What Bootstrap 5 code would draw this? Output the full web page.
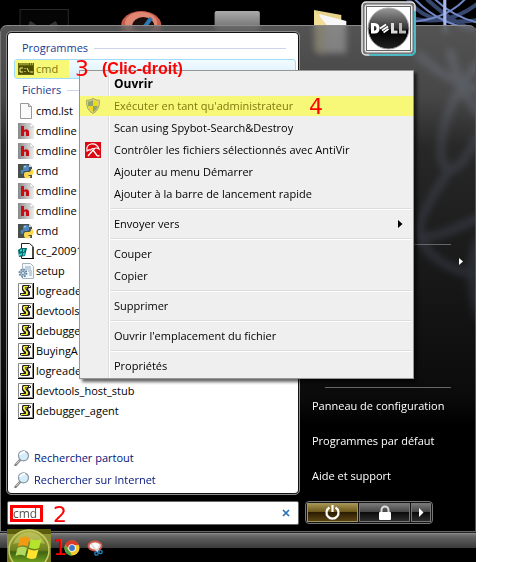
<!DOCTYPE html>
<html lang="fr">
<head>
<meta charset="utf-8">
<meta name="viewport" content="width=device-width, initial-scale=1">
<title>Menu Démarrer</title>
<link href="https://cdn.jsdelivr.net/npm/bootstrap@5.3.0/dist/css/bootstrap.min.css" rel="stylesheet">
<style>
body{font-family:"Open Sans","Noto Sans",sans-serif;font-size:11px;line-height:20px;background:#fff;color:#000;padding-right:36px}
button,input{font:inherit;color:inherit}
svg{flex:none;display:block}
.desktop{min-height:100vh;background:#000;padding-top:25px}
.wallpaper{position:absolute;inset:0;width:100%;height:100%}
.start-menu{border:1px solid #8a8a8a;border-color:#8a8a8a #555 #666 #777;border-radius:7px 7px 0 0;padding:6px;gap:6px;backdrop-filter:blur(3px);
 background:linear-gradient(rgba(104,104,104,.8) 0,rgba(88,88,88,.8) 70px,rgba(50,50,50,.8) 120px,rgba(32,32,32,.78) 240px,rgba(12,12,12,.88) 370px,#000 400px)}
.left-col{flex:0 0 292px;gap:7px}
.results{background:#fff;border:1px solid #111;outline:1px solid #8d8d8d;outline-offset:0;border-radius:4px;height:462px;padding:4px 2px 2px 6px}
.group-title{color:#1a3b94;height:22px;padding:0 10px 0 8px;gap:6px}
.group-title::after{content:"";flex:1;height:1px;background:#ccd5ea}
.item{border:0;background:none;text-align:left;height:20px;padding:0 4px;gap:2px;white-space:nowrap}
.item.hit{border:1px solid #9fdcfa;border-radius:3px;background:linear-gradient(#f3fbff,#d8f0fd);padding:0 3px}
.hit-mark{background:#f8f877;color:#777a10;margin:0 0 0 -3px;padding:0 11px 0 3px;gap:2px;height:18px;border-radius:2px 0 0 2px}
.search-links{color:#00147a}
.search-links a{color:inherit;text-decoration:none;height:22px;gap:4px}
.search-row{height:24px;background:#fff;border:1px solid #666;border-radius:2px}
.search-row input{border:0;outline:0;padding:0 5px;width:100%;height:22px;background:none;color:#555;font-size:12px}
.ring{left:2px;top:3px;width:33px;height:17px;border:3px solid #f00;pointer-events:none}
.clear-btn{border:0;background:none;width:26px;padding:0}
.side{min-width:0}
.side a{color:#fff;text-decoration:none;height:35px;line-height:35px;padding-left:7px;white-space:nowrap}
.rule{height:1px;background:#666;margin:0 18px 0 20px}
.spacer-top{height:212px}
.more{height:142px;padding:12px 5px 0 0}
.power{border:1px solid #777;border-radius:4px;height:23px;width:128px;background:#111;padding:1px;gap:1px;margin-bottom:1px}
.power button{border:1px solid #777;padding:0;background:linear-gradient(#777,#444 48%,#0c0c0c 50%,#2c2c2c);flex:0 0 51px}
.power button:first-child{background:linear-gradient(#a4924f,#6a5519 48%,#2c1c02 50%,#5a4513);border-color:#a09463}
.power button:last-child{flex:1}
.taskbar{flex:1 0 32px;border-top:1px solid #222;background:linear-gradient(#999 0,#777 1px,#606060 4px,#3a3a3a 15px,#000 15px)}
.orb-btn{border:0;padding:0;margin:-4px 0 0 7px;width:44px;height:36px;background:#77791b;overflow:hidden}
.quick{padding-left:12px;gap:6px;height:30px}
.quick button{border:0;padding:0;background:none}
.avatar{left:361px;top:1px}
.context{left:79px;top:70px;width:335px;background:#efefef;border:1px solid #979797;padding:2px 0 1px;box-shadow:3px 3px 3px rgba(0,0,0,.6);
 background-image:linear-gradient(90deg,transparent 28px,#dedede 28px,#dedede 29px,#fff 29px,#fff 30px,transparent 30px)}
.context button{border:0;background:none;width:100%;height:22px;text-align:left;padding:0 10px 0 0;white-space:nowrap}
.context .main-action{font-size:12px}
.context .pic{width:34px;padding-left:5px;flex:none}
.context .asked{background:#f8f878;color:#7e7a10;height:20px;margin:1px 0}
.cut{height:8px;padding:3px 2px 0 30px}
.cut::before{content:"";display:block;height:2px;background:#dcdcdc;border-bottom:1px solid #fff}
.note{color:#f00;font:22px/22px "DejaVu Sans",sans-serif;pointer-events:none}
.note-text{font:bold 16px/20px "Liberation Sans",Arial,sans-serif}
.n1{left:53px;top:537px}.n2{left:53px;top:504px}.n3{left:75px;top:58px}.n4{left:309px;top:96px}.n5{left:102px;top:59px}
</style>
<script src="https://cdn.jsdelivr.net/npm/bootstrap@5.3.0/dist/js/bootstrap.bundle.min.js"></script>
</head>
<body>
<svg width="0" height="0" class="position-absolute" aria-hidden="true">
<defs>
<linearGradient id="g-grey" x2="0" y2="1"><stop stop-color="#aaa"/><stop offset="1" stop-color="#666"/></linearGradient>
<linearGradient id="g-orb" x2="0" y2="1"><stop stop-color="#b0b23c"/><stop offset=".5" stop-color="#6e8020"/><stop offset=".55" stop-color="#3f6410"/><stop offset="1" stop-color="#92c82a"/></linearGradient>
<linearGradient id="g-dell" x2="0" y2="1"><stop stop-color="#999"/><stop offset=".5" stop-color="#333"/><stop offset=".55" stop-color="#000"/><stop offset="1" stop-color="#222"/></linearGradient>
<linearGradient id="g-h"><stop stop-color="#888"/><stop offset="1" stop-color="#eee"/></linearGradient>
<symbol id="i-page" viewBox="0 0 16 16"><path d="M2.500.5h8l3 3v12h-11z" fill="#fafafa" stroke="#999"/><path d="M10.500.5v3h3" fill="#ddd" stroke="#999"/></symbol>
<symbol id="i-h" viewBox="0 0 16 16"><path d="M0 0h12l4 4v12H0z" fill="url(#g-h)"/><path d="M12 0v4h4z" fill="#fff" stroke="#aaa" stroke-width=".5"/><path d="M3 3h3v4c2-1.500 5-1 5 2v4H8V9.500C8 8 6 8 6 9.500V13H3z" fill="#c80d12"/></symbol>
<symbol id="i-py" viewBox="0 0 16 16"><path d="M0 1h11l3 3v11H0z" fill="#47504b"/><path d="M11 1v3h3z" fill="#ddd"/><path d="M5 7V4q0-2 3-2t3 2v3q0 1-2 1H7q-2 0-2 3H4Q2 10 3 7z" fill="#4c88bd"/><path d="M14 6q2 1 1.500 4-.5 2-2 2h-3v1h2q0 2.500-3 2.500T6 13v-2q0-2 2-2h3q2 0 2-3z" fill="#fbd54b"/><circle cx="7" cy="3.800" r=".7" fill="#fff"/><circle cx="11" cy="14" r=".6" fill="#fff"/></symbol>
<symbol id="i-reg" viewBox="0 0 16 16"><path d="M3.500.5h8l3.500 3v12H3.500z" fill="#fff" stroke="#222"/><path d="M15 4v12M4 15.500h12" stroke="#000"/><path d="M0 7l3-2 6 0-2 8-6 1z" fill="#066"/><path d="M2 7l2-1v2l-2 1zM5 6h2l-1 3H5zM1 11l3-1v2l-3 1zM5 10l2-.5-.5 3H5z" fill="#2bd5d0"/></symbol>
<symbol id="i-setup" viewBox="0 0 16 16"><path d="M4.500.5h8l3 3v12h-11z" fill="#f3f8fc" stroke="#a5b3bf"/><path d="M7 4h6M7 6h6M10 8h4M11 10h3M11 12h3" stroke="#8fa8bb"/><circle cx="5" cy="10" r="3.500" fill="#b7cad9" stroke="#6d8ba5" stroke-width="2" stroke-dasharray="1.700 1"/><circle cx="5" cy="10" r="1.500" fill="#fff" stroke="#6d8ba5"/></symbol>
<symbol id="i-js" viewBox="0 0 16 16"><path d="M.5.5h14v14H.5z" fill="#fff" stroke="#888"/><path d="M15.500 0v15.500H0" fill="none" stroke="#000"/><path d="M5 2h6l2 1v2h-2l-1 1 2 3v3l-2 1H4l-2-1v-2h4l-2-3V3z" fill="#222"/><path d="M6 3h4v1H7v2l3 3v2l-1 1H4v-1h4V9L5 6V4z" fill="#f3e82e"/><path d="M11 3h1v1h-1zM3 11h1v1H3z" fill="#fff"/><path d="M7 5h2M6 7h2M8 9h1" stroke="#fff79a" stroke-width=".8"/></symbol>
<symbol id="i-mag" viewBox="0 0 16 16"><path d="M6 10L1.500 15" stroke="#777" stroke-width="2.400" stroke-linecap="round"/><path d="M5.500 10.500L2 14.300" stroke="#ddd"/><circle cx="9.500" cy="5.800" r="5" fill="#d5edfb" stroke="#8a98a5" stroke-width="1.200"/><path d="M6 5q1-3 5-3" stroke="#fff" stroke-width="2" fill="none"/></symbol>
</defs></svg>

<main class="desktop position-relative d-flex flex-column">
<svg class="wallpaper" viewBox="0 0 476 562" preserveAspectRatio="xMaxYMin slice" aria-hidden="true">
<path d="M22.500 9.500h48v40h-48z" fill="#050505" stroke="#292929"/><path d="M31 24q1-3 2-3l6 4h12l7-4 2 4v8H31z" fill="#333"/>
<ellipse cx="143" cy="25" rx="20" ry="14" fill="#c95b4c"/><ellipse cx="143" cy="23" rx="16" ry="11" fill="#e08774"/><ellipse cx="145" cy="26" rx="11" ry="9" fill="#1a0e0d"/><path d="M146 27l7-9" stroke="#2d79b4" stroke-width="4"/>
<rect x="216" y="11" width="45" height="20" rx="2" fill="url(#g-grey)"/>
<path d="M315 10l27 5v12l-20 28-7-5z" fill="#e9d48d"/><path d="M320 14l27 7v32h-22z" fill="#f7f7f7"/><path d="M315 10l12 14-3 31-9-5z" fill="#f3dd94"/>
<g fill="none" stroke-linecap="round">
<g stroke="#37466f" stroke-width="4"><path d="M409 0q20 30 80 18M428 0q30 27 50 30M400 14q45 18 82-14"/></g>
<g stroke="#7187c5" stroke-width="2"><path d="M445-3q-2 20 2 36M414-2q26 28 66 32M433-3q18 19 46 26M408 22q40-2 60-26"/></g>
<path d="M445 0v30" stroke="#a8b8ef" stroke-width="3"/>
<g stroke="#6f82ad" stroke-width="8" opacity=".8" style="filter:blur(2px)"><path d="M420 55q25 25 60 35M450 52q10 35 30 66M480 60Q440 110 441 153q2 22 18 12 12-14 23-40M449 170q-34 50-29 62 3 12 62-17M420 237q15 30 62 38M482 230q-18 35-4 85"/></g></g>
</svg>

<section class="start-menu position-relative d-flex">
<div class="left-col d-flex flex-column">
<div class="results d-flex flex-column">
<div class="group-title d-flex align-items-center">Programmes</div>
<button class="item hit d-flex align-items-center"><span class="hit-mark d-flex align-items-center"><svg width="16" height="16" viewBox="0 0 16 16"><path d="M0 2h16v12H0z" fill="#63650d"/><path d="M1 3h10" stroke="#bec04a"/><path d="M12 3h3" stroke="#f3f477" stroke-dasharray="1"/><path d="M1 5h14v8H1z" fill="#4b4c00"/><path d="M5 7H2v4h3M7 7v1M7 10v1M9 7l2 4M12 11h3" stroke="#f4f48a" fill="none"/></svg>cmd</span></button>
<div class="group-title d-flex align-items-center">Fichiers</div>
<button class="item d-flex align-items-center"><svg width="16" height="16"><use href="#i-page"/></svg>cmd.lst</button>
<button class="item d-flex align-items-center"><svg width="16" height="16"><use href="#i-h"/></svg>cmdline</button>
<button class="item d-flex align-items-center"><svg width="16" height="16"><use href="#i-h"/></svg>cmdline</button>
<button class="item d-flex align-items-center"><svg width="16" height="16"><use href="#i-py"/></svg>cmd</button>
<button class="item d-flex align-items-center"><svg width="16" height="16"><use href="#i-h"/></svg>cmdline</button>
<button class="item d-flex align-items-center"><svg width="16" height="16"><use href="#i-h"/></svg>cmdline</button>
<button class="item d-flex align-items-center"><svg width="16" height="16"><use href="#i-py"/></svg>cmd</button>
<button class="item d-flex align-items-center"><svg width="16" height="16"><use href="#i-reg"/></svg>cc_20091</button>
<button class="item d-flex align-items-center"><svg width="16" height="16"><use href="#i-setup"/></svg>setup</button>
<button class="item d-flex align-items-center"><svg width="16" height="16"><use href="#i-js"/></svg>logreader</button>
<button class="item d-flex align-items-center"><svg width="16" height="16"><use href="#i-js"/></svg>devtools</button>
<button class="item d-flex align-items-center"><svg width="16" height="16"><use href="#i-js"/></svg>debugger</button>
<button class="item d-flex align-items-center"><svg width="16" height="16"><use href="#i-js"/></svg>BuyingA</button>
<button class="item d-flex align-items-center"><svg width="16" height="16"><use href="#i-js"/></svg>logreader</button>
<button class="item d-flex align-items-center"><svg width="16" height="16"><use href="#i-js"/></svg>devtools_host_stub</button>
<button class="item d-flex align-items-center"><svg width="16" height="16"><use href="#i-js"/></svg>debugger_agent</button>
<div class="search-links mt-auto">
<a href="#" class="d-flex align-items-center"><svg width="16" height="16"><use href="#i-mag"/></svg>Rechercher partout</a>
<a href="#" class="d-flex align-items-center"><svg width="16" height="16"><use href="#i-mag"/></svg>Rechercher sur Internet</a>
</div>
</div>
<div class="search-row position-relative d-flex align-items-center">
<input type="text" value="cmd" aria-label="Rechercher">
<button class="clear-btn" aria-label="Effacer"><svg class="mx-auto" width="8" height="8" viewBox="0 0 8 8"><path d="M1 1l6 6M7 1L1 7" stroke="#2a72b5" stroke-width="1.700"/></svg></button>
<span class="ring position-absolute"></span>
</div>
</div>
<nav class="side flex-fill d-flex flex-column">
<div class="spacer-top"></div>
<div class="rule"></div>
<div class="more d-flex justify-content-end"><svg width="5" height="9" viewBox="0 0 5 9"><path d="M0 1l4 3.500L0 8z" fill="#fff"/></svg></div>
<div class="rule"></div>
<a href="#">Panneau de configuration</a>
<a href="#">Programmes par défaut</a>
<a href="#">Aide et support</a>
<div class="power d-flex mt-auto">
<button aria-label="Arrêter"><svg class="mx-auto" width="17" height="17" viewBox="0 0 17 17"><path d="M5.500 3.500a6 6 0 1 0 6 0M8.500 1v7" stroke="#fff" stroke-width="2.200" fill="none"/></svg></button>
<button aria-label="Verrouiller"><svg class="mx-auto" width="14" height="16" viewBox="0 0 14 16"><path d="M3.500 8V5a3.500 3.500 0 0 1 7 0v3" fill="none" stroke="#ddd" stroke-width="2"/><rect x="1" y="7" width="12" height="8" rx="1" fill="#fff"/></svg></button>
<button aria-label="Options"><svg class="mx-auto" width="5" height="9" viewBox="0 0 5 9"><path d="M0 0l4.500 4.500L0 9z" fill="#fff"/></svg></button>
</div>
</nav>
</section>

<footer class="taskbar position-relative d-flex">
<button class="orb-btn d-flex align-items-start" aria-label="Démarrer"><svg width="44" height="36" viewBox="0 0 44 36"><path d="M0 0h44v5H0z" fill="#5b5c0c"/><path d="M0 5h44v14H0z" fill="#8d8f33"/><circle cx="22" cy="21" r="20" fill="url(#g-orb)" stroke="#c5cc69" stroke-width="1.500"/><path d="M6 15Q11 3 22 3t16 12q-16-5-32 0z" fill="#d0d47a" opacity=".5"/><g transform="translate(0 -1)"><path d="M13 10q5-3 9.500 0l-2 8.500q-4-2.500-9.500 0z" fill="#f39a12"/><path d="M24 11q5 2.500 10.500 0l-2.500 9q-5 2-10-.5z" fill="#b4e52c"/><path d="M10.500 20q5-2.500 9.500 0l-2 8q-4.500-2.500-9.500 0z" fill="#b3d95d"/><path d="M21.500 21q5 2.500 10 .5l-2.500 8.500q-5 2-9.500-.5z" fill="#ffe32e"/></g></svg></button>
<div class="quick d-flex align-items-center">
<button aria-label="Chrome"><svg width="18" height="18" viewBox="0 0 18 18"><circle cx="9" cy="9" r="7.500" fill="#f4cb31"/><path d="M2 6a7.500 7.500 0 0 1 14 0H9L6 10z" fill="#d93a2b"/><path d="M2 6l5 7 2 3.500A7.500 7.500 0 0 1 2 6z" fill="#4fa544"/><circle cx="9" cy="9" r="3.800" fill="#fff"/><circle cx="9" cy="9" r="2.900" fill="#3e78c8"/></svg></button>
<button aria-label="Capture"><svg width="17" height="18" viewBox="0 0 17 18"><ellipse cx="8" cy="7" rx="6.500" ry="4.500" fill="#fff" stroke="#cf5c4b" stroke-width="2"/><path d="M4 5l7 8M13 5l-3 8" stroke="#ddd" stroke-width="1.500"/><circle cx="9.500" cy="14.500" r="1.700" fill="none" stroke="#2388c7" stroke-width="1.300"/><circle cx="13.500" cy="13" r="1.700" fill="none" stroke="#2388c7" stroke-width="1.300"/></svg></button>
</div>
</footer>

<svg class="avatar position-absolute" width="56" height="56" viewBox="0 0 56 56" role="img" aria-label="Dell"><rect x="1" y="1" width="53" height="53" rx="4" fill="#777" stroke="#e8e8e8" stroke-width="1.500"/><path d="M54 10v40q0 4-4 4H8" fill="none" stroke="#27b6c6" stroke-width="1.500"/><rect x="4" y="4" width="47" height="47" rx="2" fill="#fff" stroke="#ddd"/><rect x="5.500" y="5.500" width="44" height="44" fill="#fff" stroke="#666"/><circle cx="27.500" cy="27.500" r="20.500" fill="url(#g-dell)" stroke="#aaa"/><g fill="none" stroke="#fff" stroke-width="3"><path d="M11.500 23.500v7.500h2q3.500 0 3.500-3.700t-3.500-3.800z"/><path d="M19 27.500l6-4M21 29.500l6-4M22.500 31.500l5-3.500" stroke-width="1.800"/><path d="M31.500 22v9h5" stroke="#ddd"/><path d="M39.500 22v9h5.500" stroke="#bbb"/></g></svg>

<div class="context position-absolute" role="menu">
<button role="menuitem" class="main-action d-flex align-items-center fw-bold"><span class="pic"></span>Ouvrir</button>
<button role="menuitem" class="asked d-flex align-items-center"><span class="pic"><svg width="16" height="16" viewBox="0 0 16 16"><path d="M8 .5q3 2 6.500 1.800Q15 12 8 15.500 1 12 1.500 2.300 5 2.500 8 .5z" fill="#ddd58a" stroke="#a9a75a"/><path d="M8 2v6H3V3.500Q6 3.500 8 2zM8 8h4.800Q12 12 8 14z" fill="#8fa36a"/><path d="M8 2v6h5V3.500Q10 3.500 8 2zM8 8H3.200Q4 12 8 14z" fill="#ecd91c"/></svg></span>Exécuter en tant qu'administrateur</button>
<button role="menuitem" class="d-flex align-items-center"><span class="pic"></span>Scan using Spybot-Search&amp;Destroy</button>
<button role="menuitem" class="d-flex align-items-center"><span class="pic"><svg width="16" height="16" viewBox="0 0 16 16"><path d="M0 0h16v16H0z" fill="#db0a12"/><path d="M2 9Q1 3 6 2q6-1 8 5-3-2-5 0-2-1-3.500 1Q4 7.500 2 9z" fill="none" stroke="#fff" stroke-width="1.200"/><path d="M9 7l-6 7M8 8l4 5.500q1 1 2.500 0" stroke="#fff" stroke-width="1.300" fill="none"/></svg></span>Contrôler les fichiers sélectionnés avec AntiVir</button>
<button role="menuitem" class="d-flex align-items-center"><span class="pic"></span>Ajouter au menu Démarrer</button>
<button role="menuitem" class="d-flex align-items-center"><span class="pic"></span>Ajouter à la barre de lancement rapide</button>
<div class="cut"></div>
<button role="menuitem" class="d-flex align-items-center"><span class="pic"></span>Envoyer vers<svg class="ms-auto" width="5" height="8" viewBox="0 0 5 8"><path d="M0 0l4.500 4L0 8z"/></svg></button>
<div class="cut"></div>
<button role="menuitem" class="d-flex align-items-center"><span class="pic"></span>Couper</button>
<button role="menuitem" class="d-flex align-items-center"><span class="pic"></span>Copier</button>
<div class="cut"></div>
<button role="menuitem" class="d-flex align-items-center"><span class="pic"></span>Supprimer</button>
<div class="cut"></div>
<button role="menuitem" class="d-flex align-items-center"><span class="pic"></span>Ouvrir l'emplacement du fichier</button>
<div class="cut"></div>
<button role="menuitem" class="d-flex align-items-center"><span class="pic"></span>Propriétés</button>
</div>

<span class="note n1 position-absolute">1</span>
<span class="note n2 position-absolute">2</span>
<span class="note n3 position-absolute">3</span>
<span class="note n4 position-absolute">4</span>
<span class="note note-text n5 position-absolute">(Clic-droit)</span>
</main>
</body>
</html>
